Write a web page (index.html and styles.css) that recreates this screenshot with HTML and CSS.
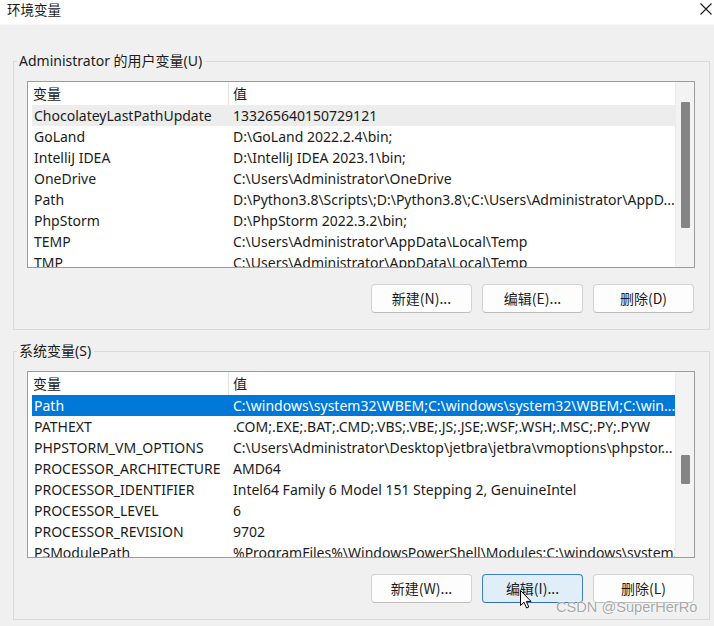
FILE: index.html
```html
<!DOCTYPE html>
<html lang="zh-CN">
<head>
<meta charset="utf-8">
<title>环境变量</title>
<link rel="stylesheet" href="styles.css">
</head>
<body>
<div class="window">
  <div class="titlebar">
    <span class="title">环境变量</span>
    <svg class="close" width="12" height="12" viewBox="0 0 12 12"><path d="M0.5 0.5 L11.5 11.5 M11.5 0.5 L0.5 11.5" stroke="#1a1a1a" stroke-width="1.1" fill="none"/></svg>
  </div>
  <div class="content">
    <fieldset class="group">
      <legend>Administrator 的用户变量(U)</legend>
      <div class="list">
        <div class="table">
          <div class="header"><div class="hcell c1">变量</div><div class="hcell c2">值</div></div>
          <div class="row hot"><div class="cell c1">ChocolateyLastPathUpdate</div><div class="cell c2">133265640150729121</div></div>
          <div class="row"><div class="cell c1">GoLand</div><div class="cell c2">D:\GoLand 2022.2.4\bin;</div></div>
          <div class="row"><div class="cell c1">IntelliJ IDEA</div><div class="cell c2">D:\IntelliJ IDEA 2023.1\bin;</div></div>
          <div class="row"><div class="cell c1">OneDrive</div><div class="cell c2">C:\Users\Administrator\OneDrive</div></div>
          <div class="row"><div class="cell c1">Path</div><div class="cell c2">D:\Python3.8\Scripts\;D:\Python3.8\;C:\Users\Administrator\AppD...</div></div>
          <div class="row"><div class="cell c1">PhpStorm</div><div class="cell c2">D:\PhpStorm 2022.3.2\bin;</div></div>
          <div class="row"><div class="cell c1">TEMP</div><div class="cell c2">C:\Users\Administrator\AppData\Local\Temp</div></div>
          <div class="row"><div class="cell c1">TMP</div><div class="cell c2">C:\Users\Administrator\AppData\Local\Temp</div></div>
        </div>
        <div class="scrollbar"><div class="thumb thumb-user"></div></div>
      </div>
      <div class="buttons">
        <button class="btn">新建(N)...</button>
        <button class="btn">编辑(E)...</button>
        <button class="btn">删除(D)</button>
      </div>
    </fieldset>

    <fieldset class="group group-sys">
      <legend>系统变量(S)</legend>
      <div class="list">
        <div class="table">
          <div class="header"><div class="hcell c1">变量</div><div class="hcell c2">值</div></div>
          <div class="row selected"><div class="cell c1">Path</div><div class="cell c2">C:\windows\system32\WBEM;C:\windows\system32\WBEM;C:\win...</div></div>
          <div class="row"><div class="cell c1">PATHEXT</div><div class="cell c2">.COM;.EXE;.BAT;.CMD;.VBS;.VBE;.JS;.JSE;.WSF;.WSH;.MSC;.PY;.PYW</div></div>
          <div class="row"><div class="cell c1">PHPSTORM_VM_OPTIONS</div><div class="cell c2">C:\Users\Administrator\Desktop\jetbra\jetbra\vmoptions\phpstor...</div></div>
          <div class="row"><div class="cell c1">PROCESSOR_ARCHITECTURE</div><div class="cell c2">AMD64</div></div>
          <div class="row"><div class="cell c1">PROCESSOR_IDENTIFIER</div><div class="cell c2">Intel64 Family 6 Model 151 Stepping 2, GenuineIntel</div></div>
          <div class="row"><div class="cell c1">PROCESSOR_LEVEL</div><div class="cell c2">6</div></div>
          <div class="row"><div class="cell c1">PROCESSOR_REVISION</div><div class="cell c2">9702</div></div>
          <div class="row"><div class="cell c1">PSModulePath</div><div class="cell c2">%ProgramFiles%\WindowsPowerShell\Modules;C:\windows\system32\WindowsPowerShell</div></div>
        </div>
        <div class="scrollbar"><div class="thumb thumb-sys"></div></div>
      </div>
      <div class="buttons">
        <button class="btn">新建(W)...</button>
        <button class="btn btn-hover">编辑(I)...</button>
        <button class="btn">删除(L)</button>
      </div>
    </fieldset>
  </div>

  <div class="watermark">CSDN @SuperHerRo</div>
  <svg class="cursor" width="13" height="19" viewBox="0 0 13 19"><path d="M0.5 0.5 L0.5 15.5 L4 12.2 L6.6 18 L8.8 17 L6.3 11.4 L11 11.4 Z" fill="#ffffff" stroke="#000000" stroke-width="1" stroke-linejoin="round"/></svg>
</div>
</body>
</html>
```

FILE: styles.css
```css
* { box-sizing: border-box; }

html, body {
  margin: 0;
  padding: 0;
}

body {
  width: 714px;
  height: 626px;
  overflow: hidden;
  background: #f0f0f0;
  font-family: "Noto Sans", "Noto Sans CJK SC", sans-serif;
  font-size: 14px;
  color: #1b1b1b;
}

.window {
  position: relative;
  width: 714px;
  height: 626px;
  background: #f0f0f0;
}

.titlebar {
  height: 25px;
  background: #ffffff;
  display: flex;
  justify-content: space-between;
  align-items: flex-start;
  padding: 0 2px 0 7px;
  border-bottom: 1px solid #f6f6f6;
}

.title {
  font-family: "Noto Sans CJK SC", sans-serif;
  font-size: 13.5px;
  line-height: 18px;
  color: #1b1b1b;
}

.close {
  margin-top: 3px;
}

.content {
  display: flex;
  flex-direction: column;
}

.group {
  margin: 26px 4px 0 13px;
  padding: 10px 14px 16px 13px;
  border: 1px solid #d9d9d9;
  min-width: 0;
}

.group-sys {
  margin-top: 11px;
}

.group legend {
  margin-left: -10px;
  padding: 0 3px 0 2px;
  line-height: 20px;
  font-family: "Noto Sans", "Noto Sans CJK SC", sans-serif;
  font-size: 14px;
}

.list {
  display: flex;
  height: 187px;
  background: #ffffff;
  border: 1px solid #9c9c9c;
  overflow: hidden;
}

.table {
  flex: 1;
  min-width: 0;
  padding-left: 4px;
  overflow: hidden;
}

.header {
  display: flex;
  height: 23px;
  line-height: 23px;
  font-family: "Noto Sans CJK SC", sans-serif;
}

.hcell.c1 {
  width: 196px;
  padding-left: 1px;
}

.hcell.c2 {
  flex: 1;
  border-left: 1px solid #e5e5e5;
  padding-left: 4px;
}

.row {
  display: flex;
  height: 21px;
  line-height: 21px;
  white-space: nowrap;
}

.row.hot {
  background: #ededed;
}

.row.selected {
  background: #0078d7;
  color: #ffffff;
}

.cell {
  overflow: hidden;
}

.cell.c1 {
  width: 196px;
  flex: none;
  padding-left: 2px;
}

.cell.c2 {
  flex: 1;
  min-width: 0;
  padding-left: 5px;
}

.scrollbar {
  width: 19px;
  flex: none;
  background: #f3f3f3;
  border-left: 1px solid #ececec;
  display: flex;
  flex-direction: column;
  align-items: center;
}

.thumb {
  width: 9px;
  background: #858585;
  border-radius: 1px;
}

.thumb-user {
  margin-top: 20px;
  height: 126px;
}

.thumb-sys {
  margin-top: 83px;
  height: 29px;
}

.buttons {
  display: flex;
  justify-content: flex-end;
  gap: 10px;
  margin-top: 16px;
  padding-right: 1px;
}

.btn {
  width: 101px;
  height: 29px;
  background: #fdfdfd;
  border: 1px solid #d3d3d3;
  border-bottom-color: #bdbdbd;
  border-radius: 4px;
  font-family: "Noto Sans CJK SC", sans-serif;
  font-size: 14px;
  color: #1b1b1b;
  padding: 0;
  line-height: 27px;
}

.btn-hover {
  background: #e0eef9;
  border-color: #3c7fc4;
  border-bottom-color: #2f6fb0;
}

.watermark {
  position: absolute;
  left: 556px;
  top: 597px;
  white-space: nowrap;
  font-family: "Liberation Sans", sans-serif;
  font-size: 14.6px;
  line-height: 20px;
  color: rgba(150, 150, 150, 0.85);
  text-shadow: 0 0 2px #ffffff, 0 0 1px #ffffff;
}

.cursor {
  position: absolute;
  left: 520px;
  top: 590px;
}
```
